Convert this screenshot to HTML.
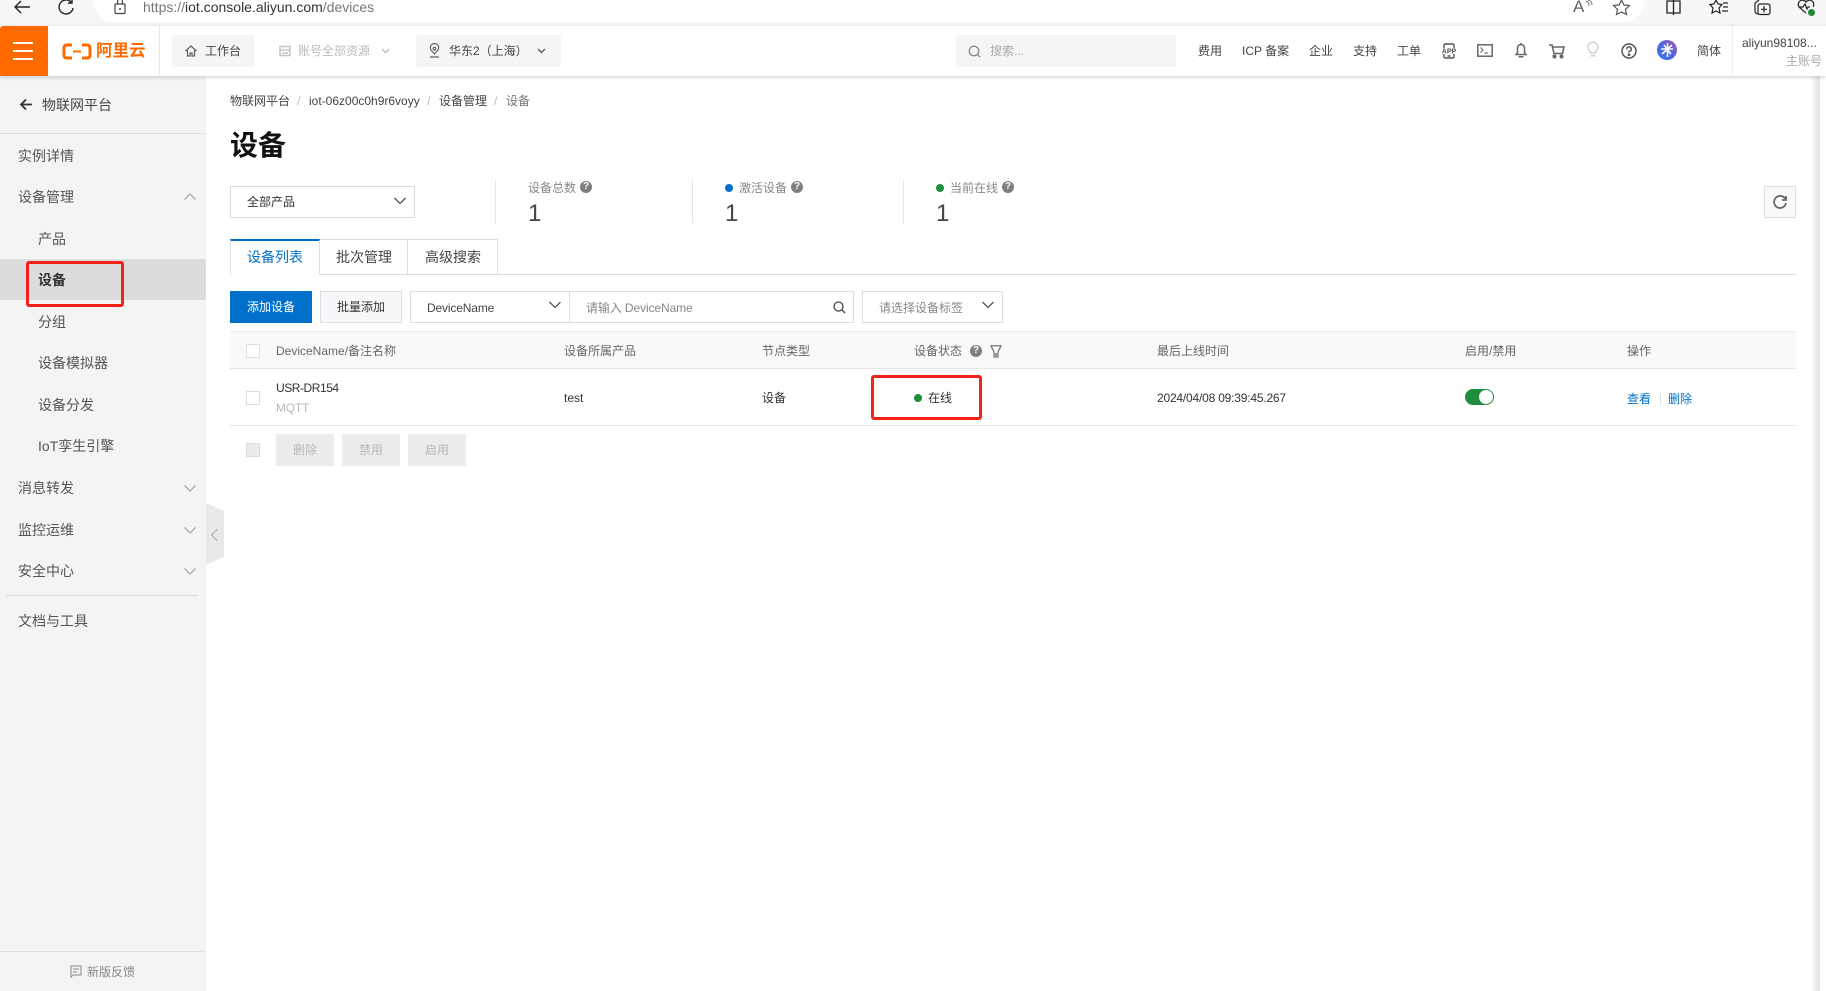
<!DOCTYPE html>
<html lang="zh-CN"><head><meta charset="utf-8"><title>设备</title>
<style>
html,body{margin:0;padding:0;width:1826px;height:991px;overflow:hidden;background:#fff}
body{position:relative;font-family:"Liberation Sans","Noto Sans CJK SC",sans-serif;font-size:12px;color:#333}
.a{position:absolute;box-sizing:border-box}
.t{position:absolute;white-space:nowrap;line-height:20px;height:20px}
svg{position:absolute;overflow:visible}
.n{font-size:14px;color:#555;left:18px}
.s{font-size:14px;color:#555;left:38px}
.h{color:#666}
.q{position:absolute;width:12px;height:12px;border-radius:50%;background:#7f7f7f;color:#fff;font-size:10px;line-height:12px;text-align:center;font-weight:bold}
.top{color:#444}
.dis{position:absolute;top:434px;height:32px;width:58px;background:#ebecee;color:#b8b8b8;text-align:center;line-height:33px}
.cb{position:absolute;width:14px;height:14px;border:1px solid #dcdee3;background:#fff;box-sizing:border-box}
</style></head><body>

<!-- browser bar -->
<div class="a" style="left:0;top:0;width:1826px;height:26px;background:#f7f7f7"></div>
<div class="a" style="left:94px;top:-20px;width:1550px;height:42px;background:#fff;border-radius:0 0 20px 20px"></div>
<svg style="left:14px;top:0" width="22" height="16" fill="none" stroke="#222" stroke-width="1.400"><path d="M1 7H16M7 1L1 7L7 13"/></svg>
<svg style="left:58px;top:0" width="18" height="16" fill="none" stroke="#222" stroke-width="1.400"><path d="M13 2A7 7 0 1 0 15 8M14 -1V3H10"/></svg>
<svg style="left:114px;top:0" width="14" height="16" fill="none" stroke="#444" stroke-width="1.200"><rect x="1" y="4" width="10" height="9.500" rx="1"/><path d="M3.500 4V1.500A2.500 2.500 0 0 1 8.500 1.500V4"/><circle cx="6" cy="9" r="1" fill="#444" stroke="none"/></svg>
<div class="t" style="left:143px;top:-3px;font-size:14px;color:#777">https://<span style="color:#333">iot.console.aliyun.com</span>/devices</div>
<div class="t" style="left:1573px;top:-3px;font-size:17px;color:#666">A</div>
<svg style="left:1585px;top:0" width="8" height="8" fill="none" stroke="#777"><path d="M1 1Q4 2 4 6M3 0Q7 1 7 5"/></svg>
<svg style="left:1613px;top:0" width="18" height="16" fill="none" stroke="#555" stroke-width="1.200"><path d="M8.500 0L11 5L16.500 5.500L12.500 9.500L13.500 14.500L8.500 12L3.500 14.500L4.500 9.500L.5 5.500L6 5Z"/></svg>
<svg style="left:1666px;top:0" width="16" height="15" fill="none" stroke="#222" stroke-width="1.300"><path d="M1 1H14V13H1ZM7.500 -1V15"/></svg>
<svg style="left:1710px;top:0" width="22" height="16" fill="none" stroke="#222" stroke-width="1.200"><path d="M6 0L8 4L12 4.500L9 8L10 13L6 11L2 13L3 8L0 4.500L4 4ZM13 3H18M13 7H18M12 11H18"/></svg>
<svg style="left:1754px;top:0" width="20" height="16" fill="none" stroke="#222" stroke-width="1.200"><path d="M4 14A3 3 0 0 1 1 11V3L5 0"/><rect x="4" y="4" width="12" height="10.500" rx="2"/><path d="M10 6V12.500M7 9.300H13"/></svg>
<svg style="left:1797px;top:0" width="20" height="17" fill="none" stroke="#222" stroke-width="1.200"><path d="M9 13L2 7A4 4 0 0 1 9 2A4 4 0 0 1 16 7M2 7H6L8 4L10 9L11 7H13"/><circle cx="14.500" cy="12.500" r="3.500" fill="#1f8a36" stroke="none"/></svg>

<!-- header -->
<div class="a" style="left:0;top:26px;width:1826px;height:50px;background:#fff;box-shadow:0 1px 4px rgba(0,0,0,.2);z-index:3">
  <div class="a" style="left:0;top:0;width:48px;height:50px;background:#ff6a00;border-radius:3px 0 0 0"></div>
  <div class="a" style="left:13px;top:16px;width:20px;height:2px;background:#fff"></div>
  <div class="a" style="left:13px;top:24px;width:20px;height:2px;background:#fff"></div>
  <div class="a" style="left:13px;top:32px;width:20px;height:2px;background:#fff"></div>
  <svg style="left:62px;top:17px" width="30" height="18" fill="none" stroke="#ff6a00" stroke-width="3"><path d="M10 2H5Q2 2 2 5V12Q2 15 5 15H10M20 2H25Q28 2 28 5V12Q28 15 25 15H20"/><path d="M11 8.500H19" stroke-width="2"/></svg>
  <div class="t" style="left:96px;top:14px;font-size:16.500px;font-weight:bold;color:#ff6a00;line-height:22px;height:22px">阿里云</div>
  <div class="a" style="left:159px;top:0;width:1px;height:50px;background:#e8e8e8"></div>
  <div class="a" style="left:172px;top:9px;width:82px;height:32px;background:#f4f5f7;border-radius:2px"></div>
  <svg style="left:185px;top:19px" width="12" height="12" fill="none" stroke="#666" stroke-width="1.300"><path d="M.5 6L6 1L11.500 6M2.500 5V11H5V8H7V11H9.500V5"/></svg>
  <div class="t top" style="left:205px;top:15px">工作台</div>
  <svg style="left:279px;top:19px" width="12" height="12" fill="none" stroke="#c4c6cc" stroke-width="1.500"><path d="M1 1.500H11V5H1ZM1 5V10.500H11V5M3 8H9"/></svg>
  <div class="t" style="left:298px;top:15px;color:#bbb">账号全部资源</div>
  <svg style="left:381px;top:22px" width="9" height="6" fill="none" stroke="#bbb" stroke-width="1.300"><path d="M1 1L4.500 4.500L8 1"/></svg>
  <div class="a" style="left:416px;top:9px;width:145px;height:32px;background:#f4f5f7;border-radius:2px"></div>
  <svg style="left:429px;top:18px" width="11" height="14" fill="none" stroke="#666" stroke-width="1.200"><path d="M5.500 10L2 6A4.200 4.200 0 1 1 9 6ZM1 13H10"/><circle cx="5.500" cy="4.700" r="1.300"/></svg>
  <div class="t top" style="left:449px;top:15px">华东2（上海）</div>
  <svg style="left:537px;top:22px" width="9" height="6" fill="none" stroke="#555" stroke-width="1.300"><path d="M1 1L4.500 4.500L8 1"/></svg>

  <div class="a" style="left:956px;top:9px;width:220px;height:32px;background:#f4f5f7"></div>
  <svg style="left:968px;top:19px" width="13" height="13" fill="none" stroke="#777" stroke-width="1.100"><circle cx="6" cy="6" r="4.800"/><path d="M9.500 9.500L12 12"/></svg>
  <div class="t" style="left:990px;top:15px;color:#aaa">搜索...</div>
  <div class="t top" style="left:1198px;top:15px">费用</div>
  <div class="t top" style="left:1242px;top:15px">ICP 备案</div>
  <div class="t top" style="left:1309px;top:15px">企业</div>
  <div class="t top" style="left:1353px;top:15px">支持</div>
  <div class="t top" style="left:1397px;top:15px">工单</div>
  <svg style="left:1441px;top:17px" width="16" height="16" fill="none" stroke="#555" stroke-width="1.400"><path d="M3 5V2.500Q3 1 4.500 1H11.500Q13 1 13 2.500V5M3 11V13.500Q3 15 4.500 15H11.500Q13 15 13 13.500V11M6.500 13H9.500"/><text x="8" y="10.500" font-size="7" font-weight="bold" fill="#555" stroke="none" text-anchor="middle" font-family="Liberation Sans">APP</text></svg>
  <svg style="left:1477px;top:18px" width="16" height="14" fill="none" stroke="#666" stroke-width="1.500"><rect x=".8" y=".8" width="14.400" height="11.400"/><path d="M3.500 3.500L6 6L3.500 8.500M7 9H11" stroke-width="1.100"/></svg>
  <svg style="left:1515px;top:16px" width="12" height="16" fill="none" stroke="#666" stroke-width="1.500"><path d="M1 12.500H11L9.500 10.500V6A3.500 3.500 0 0 0 2.500 6V10.500ZM6 1V2.500M3.500 14.800H8.500"/></svg>
  <svg style="left:1549px;top:18px" width="16" height="15" fill="none" stroke="#666" stroke-width="1.600"><path d="M0 1H3L5 9.500H13.500L15 3H3.500"/><circle cx="5.500" cy="12.500" r="1.200" fill="#666"/><circle cx="12.500" cy="12.500" r="1.200" fill="#666"/></svg>
  <svg style="left:1587px;top:16px" width="12" height="16" fill="none" stroke="#c6ccd2" stroke-width="1.300"><path d="M3.500 11V9.500A5 5 0 1 1 8.500 9.500V11ZM3.500 13.800H8.500"/></svg>
  <svg style="left:1621px;top:17px" width="16" height="16" fill="none" stroke="#555" stroke-width="1.500"><circle cx="8" cy="8" r="7"/><path d="M5.700 6.200A2.300 2.300 0 1 1 8 8.500V9.500"/><circle cx="8" cy="11.700" r=".6" fill="#555"/></svg>
  <svg style="left:1657px;top:14px" width="20" height="20"><defs><linearGradient id="g" x1="0" y1="1" x2="1" y2="0"><stop offset="0" stop-color="#2d7cf0"/><stop offset=".6" stop-color="#5a63d8"/><stop offset="1" stop-color="#c0559a"/></linearGradient></defs><circle cx="10" cy="10" r="10" fill="url(#g)"/><path d="M10.500 3V17M4 9H16M5 14L15 5M7 5L14 14" stroke="#fff" stroke-width="1.600" fill="none"/></svg>
  <div class="t top" style="left:1697px;top:15px">简体</div>
  <div class="a" style="left:1732px;top:0;width:1px;height:50px;background:#eee"></div>
  <div class="t" style="left:1742px;top:7px;color:#444">aliyun98108...</div>
  <div class="t" style="left:1786px;top:25px;color:#aaa">主账号</div>
</div>

<!-- sidebar -->
<div class="a" style="left:0;top:76px;width:206px;height:915px;background:#f4f4f4"></div>
<svg style="left:19px;top:98px" width="14" height="14" fill="none" stroke="#333" stroke-width="1.800"><path d="M13 6.500H2M7 1.500L2 6.500L7 11.500"/></svg>
<div class="t" style="left:42px;top:95px;font-size:14px;color:#444">物联网平台</div>
<div class="a" style="left:0;top:133px;width:206px;height:1px;background:#e0e0e0"></div>
<div class="t n" style="top:146px">实例详情</div>
<div class="t n" style="top:187px">设备管理</div>
<svg style="left:184px;top:193px" width="12" height="7" fill="none" stroke="#aaa" stroke-width="1.300"><path d="M.5 6.500L6 1L11.500 6.500"/></svg>
<div class="t s" style="top:229px">产品</div>
<div class="a" style="left:0;top:259px;width:206px;height:41px;background:#dcdcdc"></div>
<div class="t s" style="top:270px;font-weight:bold;color:#333">设备</div>
<div class="a" style="left:26px;top:261px;width:98px;height:46px;border:3px solid #f5221a;border-radius:3px"></div>
<div class="t s" style="top:312px">分组</div>
<div class="t s" style="top:353px">设备模拟器</div>
<div class="t s" style="top:395px">设备分发</div>
<div class="t s" style="top:436px">IoT孪生引擎</div>
<div class="t n" style="top:478px">消息转发</div>
<svg style="left:184px;top:485px" width="12" height="7" fill="none" stroke="#aaa" stroke-width="1.300"><path d="M.5 .5L6 6L11.500 .5"/></svg>
<div class="t n" style="top:520px">监控运维</div>
<svg style="left:184px;top:527px" width="12" height="7" fill="none" stroke="#aaa" stroke-width="1.300"><path d="M.5 .5L6 6L11.500 .5"/></svg>
<div class="t n" style="top:561px">安全中心</div>
<svg style="left:184px;top:568px" width="12" height="7" fill="none" stroke="#aaa" stroke-width="1.300"><path d="M.5 .5L6 6L11.500 .5"/></svg>
<div class="a" style="left:6px;top:595px;width:192px;height:1px;background:#dcdcdc"></div>
<div class="t n" style="top:611px">文档与工具</div>
<div class="a" style="left:0;top:951px;width:206px;height:1px;background:#e0e0e0"></div>
<svg style="left:70px;top:965px" width="12" height="13" fill="none" stroke="#888" stroke-width="1"><path d="M1 1H11V10H3L1 12ZM3 4H9M3 7H7"/></svg>
<div class="t" style="left:87px;top:962px;color:#888">新版反馈</div>
<svg style="left:206px;top:503px" width="18" height="62"><path d="M0 0L18 8V54L0 62Z" fill="#e9e9e9"/><path d="M11.500 26L5.500 32L11.500 38" fill="none" stroke="#bbb" stroke-width="1.500"/></svg>

<!-- right shadow -->
<div class="a" style="left:1810px;top:76px;width:10px;height:915px;background:linear-gradient(90deg,#fff,#e2e2e2)"></div>

<!-- breadcrumb -->
<div class="t" style="left:230px;top:91px;color:#444">物联网平台</div>
<div class="t" style="left:297px;top:91px;color:#bbb">/</div>
<div class="t" style="left:309px;top:91px;color:#444">iot-06z00c0h9r6voyy</div>
<div class="t" style="left:427px;top:91px;color:#bbb">/</div>
<div class="t" style="left:439px;top:91px;color:#444">设备管理</div>
<div class="t" style="left:494px;top:91px;color:#bbb">/</div>
<div class="t" style="left:506px;top:91px;color:#777">设备</div>
<div class="t" style="left:230px;top:128px;font-size:28px;font-weight:bold;color:#111;line-height:36px;height:36px">设备</div>

<!-- product select + stats -->
<div class="a" style="left:230px;top:186px;width:185px;height:32px;border:1px solid #d8dae0"></div>
<div class="t" style="left:247px;top:192px;color:#333">全部产品</div>
<svg style="left:394px;top:197px" width="12" height="8" fill="none" stroke="#555" stroke-width="1.300"><path d="M.5 1L6 6.500L11.500 1"/></svg>
<div class="a" style="left:495px;top:180px;width:1px;height:43px;background:#e6e6e6"></div>
<div class="a" style="left:692px;top:180px;width:1px;height:43px;background:#e6e6e6"></div>
<div class="a" style="left:903px;top:180px;width:1px;height:43px;background:#e6e6e6"></div>
<div class="t" style="left:528px;top:178px;color:#888">设备总数</div><div class="q" style="left:580px;top:181px">?</div>
<div class="t" style="left:528px;top:200px;font-size:24px;color:#444;line-height:28px;height:28px">1</div>
<div class="a" style="left:725px;top:184px;width:8px;height:8px;border-radius:50%;background:#0070cc"></div>
<div class="t" style="left:739px;top:178px;color:#888">激活设备</div><div class="q" style="left:791px;top:181px">?</div>
<div class="t" style="left:725px;top:200px;font-size:24px;color:#444;line-height:28px;height:28px">1</div>
<div class="a" style="left:936px;top:184px;width:8px;height:8px;border-radius:50%;background:#1e8e3e"></div>
<div class="t" style="left:950px;top:178px;color:#888">当前在线</div><div class="q" style="left:1002px;top:181px">?</div>
<div class="t" style="left:936px;top:200px;font-size:24px;color:#444;line-height:28px;height:28px">1</div>
<div class="a" style="left:1764px;top:186px;width:32px;height:32px;border:1px solid #dcdee3;background:#fafafa"></div>
<svg style="left:1773px;top:195px" width="14" height="14" fill="none" stroke="#666" stroke-width="1.800"><path d="M12 3.500A6 6 0 1 0 13 8M13 1V5H9"/></svg>

<!-- tabs -->
<div class="a" style="left:230px;top:274px;width:1566px;height:1px;background:#dcdee3"></div>
<div class="a" style="left:230px;top:239px;width:90px;height:36px;background:#fff;border-left:1px solid #dcdee3;border-right:1px solid #dcdee3;border-top:2px solid #0070cc"></div>
<div class="a" style="left:320px;top:239px;width:88px;height:35px;border-top:1px solid #dcdee3;border-right:1px solid #dcdee3"></div>
<div class="a" style="left:408px;top:239px;width:90px;height:35px;border-top:1px solid #dcdee3;border-right:1px solid #dcdee3"></div>
<div class="t" style="left:247px;top:247px;font-size:14px;color:#0070cc">设备列表</div>
<div class="t" style="left:336px;top:247px;font-size:14px;color:#444">批次管理</div>
<div class="t" style="left:425px;top:247px;font-size:14px;color:#444">高级搜索</div>

<!-- toolbar -->
<div class="a" style="left:230px;top:291px;width:82px;height:32px;background:#0070cc;color:#fff;text-align:center;line-height:33px">添加设备</div>
<div class="a" style="left:320px;top:291px;width:82px;height:32px;background:#f7f8fa;border:1px solid #dcdee3;color:#333;text-align:center;line-height:31px">批量添加</div>
<div class="a" style="left:410px;top:291px;width:444px;height:32px;border:1px solid #dcdee3"></div>
<div class="a" style="left:569px;top:291px;width:1px;height:32px;background:#dcdee3"></div>
<div class="t" style="left:427px;top:298px;color:#444;letter-spacing:-.15px">DeviceName</div>
<svg style="left:549px;top:301px" width="12" height="8" fill="none" stroke="#555" stroke-width="1.300"><path d="M.5 1L6 6.500L11.500 1"/></svg>
<div class="t" style="left:586px;top:298px;color:#888;letter-spacing:-.1px">请输入 DeviceName</div>
<svg style="left:833px;top:301px" width="13" height="13" fill="none" stroke="#444" stroke-width="1.300"><circle cx="5.500" cy="5.500" r="4.500"/><path d="M9 9L12 12"/></svg>
<div class="a" style="left:862px;top:291px;width:141px;height:32px;border:1px solid #dcdee3"></div>
<div class="t" style="left:879px;top:298px;color:#888">请选择设备标签</div>
<svg style="left:982px;top:301px" width="12" height="8" fill="none" stroke="#555" stroke-width="1.300"><path d="M.5 1L6 6.500L11.500 1"/></svg>

<!-- table -->
<div class="a" style="left:230px;top:331px;width:1566px;height:38px;background:#f9f9f9;border-top:1px solid #ebecee;border-bottom:1px solid #e6e7eb"></div>
<div class="cb" style="left:246px;top:344px"></div>
<div class="t h" style="left:276px;top:341px">DeviceName/备注名称</div>
<div class="t h" style="left:564px;top:341px">设备所属产品</div>
<div class="t h" style="left:762px;top:341px">节点类型</div>
<div class="t h" style="left:914px;top:341px">设备状态</div>
<div class="q" style="left:970px;top:345px">?</div>
<svg style="left:990px;top:345px" width="12" height="13" fill="none" stroke="#666" stroke-width="1.100"><path d="M1 .8H11L8 7V12.200H4V7Z"/><path d="M4 8H8V12.500H4Z" fill="#999" stroke="none"/></svg>
<div class="t h" style="left:1157px;top:341px">最后上线时间</div>
<div class="t h" style="left:1465px;top:341px">启用/禁用</div>
<div class="t h" style="left:1627px;top:341px">操作</div>

<div class="a" style="left:230px;top:425px;width:1566px;height:1px;background:#e6e7eb"></div>
<div class="cb" style="left:246px;top:391px"></div>
<div class="t" style="left:276px;top:378px;color:#333;letter-spacing:-.45px">USR-DR154</div>
<div class="t" style="left:276px;top:398px;color:#bbb;letter-spacing:-.2px">MQTT</div>
<div class="t" style="left:564px;top:388px;color:#333">test</div>
<div class="t" style="left:762px;top:388px;color:#333">设备</div>
<div class="a" style="left:871px;top:375px;width:111px;height:45px;border:3px solid #f5221a;border-radius:3px"></div>
<div class="a" style="left:914px;top:394px;width:8px;height:8px;border-radius:50%;background:#1e8e3e"></div>
<div class="t" style="left:928px;top:388px;color:#333">在线</div>
<div class="t" style="left:1157px;top:388px;color:#333;letter-spacing:-.2px">2024/04/08 09:39:45.267</div>
<div class="a" style="left:1465px;top:389px;width:29px;height:16px;border-radius:8px;background:#1e8e3e"></div>
<div class="a" style="left:1479px;top:390px;width:14px;height:14px;border-radius:50%;background:#fff"></div>
<div class="t" style="left:1627px;top:389px;color:#0070cc">查看</div>
<div class="a" style="left:1660px;top:393px;width:1px;height:12px;background:#dcdee3"></div>
<div class="t" style="left:1668px;top:389px;color:#0070cc">删除</div>

<div class="a" style="left:246px;top:443px;width:14px;height:14px;background:#ebebeb;border:1px solid #dcdee3"></div>
<div class="dis" style="left:276px">删除</div>
<div class="dis" style="left:342px">禁用</div>
<div class="dis" style="left:408px">启用</div>
</body></html>
